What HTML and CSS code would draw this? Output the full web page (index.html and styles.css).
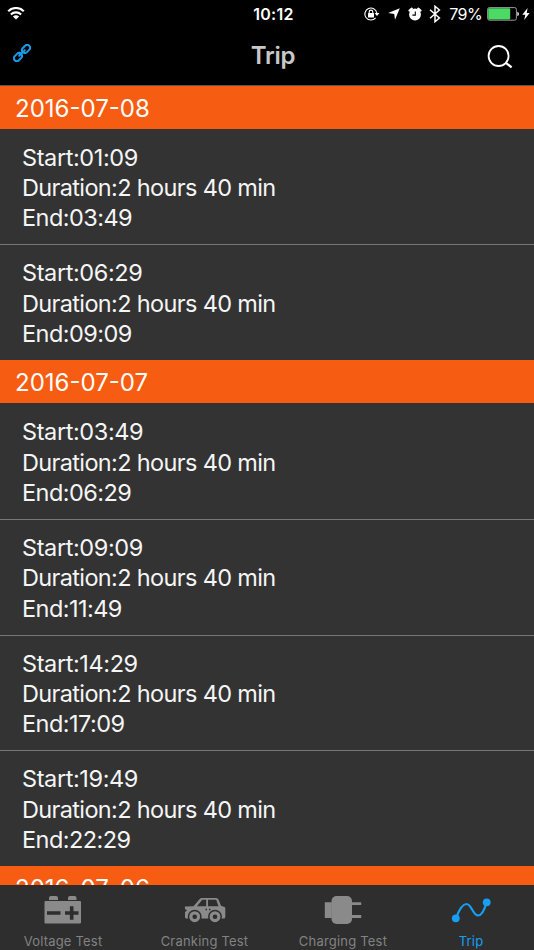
FILE: index.html
```
<!DOCTYPE html>
<html lang="en">
<head>
  <meta charset="UTF-8">
  <title>Trip</title>
  <link rel="stylesheet" href="styles.css">
</head>
<body>

  <header>
    <div class="status">
      <svg class="wifi" width="18" height="14" viewBox="0 0 18 14" fill="none" stroke="#fff" stroke-width="2.1">
        <path d="M1.2 4.200a11 11 0 0 1 15.6 0M3.900 7.500a7.200 7.200 0 0 1 10.200 0"/>
        <path d="M5.900 9.600a4.400 4.400 0 0 1 6.200 0L9 12.600z" fill="#fff" stroke="none"/>
      </svg>
      <span class="time">10:12</span>
      <div class="status-right">
        <svg class="lock" width="16" height="14" viewBox="0 0 16 14">
          <path d="M11.6 10.8A6 6 0 1 1 12.8 6" fill="none" stroke="#fff" stroke-width="1.1"/>
          <path d="M10.6 5.9h4.8l-2.4 3z" fill="#fff"/>
          <rect x="4" y="6" width="6" height="4.4" rx=".5" fill="#fff"/>
          <path d="M5.2 6.3V4.9a1.8 1.8 0 0 1 3.6 0v1.4" fill="none" stroke="#fff" stroke-width="1.1"/>
        </svg>
        <svg class="arrow" width="12" height="12" viewBox="0 0 12 12" fill="#fff">
          <path d="M11.8.2L7 11.8 6.2 5.9.2 5z"/>
        </svg>
        <svg class="alarm" width="14" height="14" viewBox="0 0 14 14">
          <path d="M1.500 3.600L3.800 1.700M12.500 3.600l-2.300-1.900" stroke="#fff" stroke-width="2.2" stroke-linecap="round"/>
          <circle cx="7" cy="7.500" r="5.9" fill="#fff"/>
          <path d="M7.3 4.4v3.7H4.4" fill="none" stroke="#000" stroke-width="1.1"/>
        </svg>
        <svg class="bluetooth" width="12" height="18" viewBox="0 0 12 18" fill="none" stroke="#fff" stroke-width="1.5">
          <path d="M1 4.800l9.400 8.200L6 16.700V1.300L10.400 5 1 13.200"/>
        </svg>
        <span class="percent">79%</span>
        <svg class="battery" width="32" height="14" viewBox="0 0 32 14">
          <rect x=".6" y=".6" width="28.8" height="12.6" rx="1.8" fill="none" stroke="#aaa" stroke-width=".9"/>
          <rect x="1.2" y="1.2" width="22" height="11.4" rx="1" fill="#4cd964"/>
          <path d="M30.4 4.8q1.5.4 1.5 2.1t-1.5 2.1z" fill="#fff"/>
        </svg>
        <svg class="bolt" width="8" height="12" viewBox="0 0 8 12" fill="#fff">
          <path d="M5.6 0L.3 6.7h3L2.2 12l5.4-7.1H4.7z"/>
        </svg>
      </div>
    </div>
    <div class="nav">
      <svg class="link" width="18" height="18" viewBox="0 0 18 18">
        <g transform="rotate(-45 9 9)" fill="none" stroke="#1a9bea" stroke-width="2">
          <rect x="-1.200" y="6.100" width="9" height="5.800" rx="2.900"/>
          <rect x="10.200" y="6.100" width="9" height="5.800" rx="2.900"/>
          <path d="M5 9h8" stroke-linecap="round"/>
        </g>
      </svg>
      <h1>Trip</h1>
      <svg class="search" width="26" height="24" viewBox="0 0 26 24" fill="none" stroke="#fff" stroke-width="1.8">
        <circle cx="11.6" cy="11" r="10"/>
        <path d="M18.6 17.6l6 4.8" stroke-width="2.2"/>
      </svg>
    </div>
  </header>

  <main>
    <h2>2016-07-08</h2>
    <div class="trip">
      <p class="start">Start:01:09</p>
      <p class="duration">Duration:2 hours 40 min</p>
      <p class="end">End:03:49</p>
    </div>
    <div class="trip">
      <p class="start">Start:06:29</p>
      <p class="duration">Duration:2 hours 40 min</p>
      <p class="end">End:09:09</p>
    </div>

    <h2>2016-07-07</h2>
    <div class="trip">
      <p class="start">Start:03:49</p>
      <p class="duration">Duration:2 hours 40 min</p>
      <p class="end">End:06:29</p>
    </div>
    <div class="trip">
      <p class="start">Start:09:09</p>
      <p class="duration">Duration:2 hours 40 min</p>
      <p class="end">End:11:49</p>
    </div>
    <div class="trip">
      <p class="start">Start:14:29</p>
      <p class="duration">Duration:2 hours 40 min</p>
      <p class="end">End:17:09</p>
    </div>
    <div class="trip">
      <p class="start">Start:19:49</p>
      <p class="duration">Duration:2 hours 40 min</p>
      <p class="end">End:22:29</p>
    </div>

    <h2>2016-07-06</h2>
  </main>

  <footer>
    <div class="tab">
      <svg width="38" height="28" viewBox="0 0 38 28" fill="#8a8a8a">
        <path d="M5 4V2q0-2 2-2h5q2 0 2 2v2zM24 4V2q0-2 2-2h4.500q2 0 2 2v2z"/>
        <rect x=".5" y="5" width="36.500" height="22.500" rx="1"/>
        <path d="M3 17h13.500M21 17h13.500M27.700 10.300v13.400" fill="none" stroke="#2e2e2e" stroke-width="3.600"/>
      </svg>
      <span>Voltage Test</span>
    </div>
    <div class="tab">
      <svg width="42" height="28" viewBox="0 0 42 28">
        <path fill="#8a8a8a" fill-rule="evenodd" d="M.8 10.500L9.500 10.300 15.500 3.300Q16.500 2 18 2H32q2 0 2.600 1.700L37 9.700l3.500 1.300q.8.300.8 1.500V21q0 1.500-1.500 1.500H2.500Q1 22.500 1 21v-5l2-1.500L1 13zM13 10.300h9.200V3.800h-4zM24 10.300h10.500L32.200 3.800H24z"/>
        <g fill="#8a8a8a" stroke="#2e2e2e" stroke-width="1.500">
          <circle cx="10.700" cy="20.700" r="6.200"/>
          <circle cx="31" cy="20.700" r="6.200"/>
        </g>
        <circle cx="10.700" cy="20.700" r="2.300" fill="#2e2e2e"/>
        <circle cx="31" cy="20.700" r="2.300" fill="#2e2e2e"/>
        <path d="M21.500 13.500h1.500M25 13.500h1.500" stroke="#2e2e2e" stroke-width="1.300"/>
      </svg>
      <span>Cranking Test</span>
    </div>
    <div class="tab">
      <svg width="38" height="28" viewBox="0 0 38 28" fill="#8a8a8a">
        <path d="M.8 6.200h7v15.800h-7zM27 6.200h10.200V9H27zM27 19h10.200v3H27z"/>
        <rect x="7.500" width="20.500" height="28" rx="5"/>
      </svg>
      <span>Charging Test</span>
    </div>
    <div class="tab active">
      <svg width="40" height="28" viewBox="0 0 40 28" fill="#159ff5">
        <path d="M5 22C8 14 11 8 15.500 8 20.500 8 22 19.500 27 19.500 31 19.500 33.500 14 35.500 6" fill="none" stroke="#159ff5" stroke-width="2.200"/>
        <circle cx="4.800" cy="22.300" r="3.900"/>
        <circle cx="35.700" cy="6.300" r="3.900"/>
      </svg>
      <span>Trip</span>
    </div>
  </footer>

</body>
</html>
```

FILE: styles.css
```
* {
  box-sizing: border-box;
}
body {
  margin: 0;
  height: 950px;
  display: flex;
  flex-direction: column;
  overflow: hidden;
  font-family: Inter, "Liberation Sans", sans-serif;
  background-color: #333;
  color: #f5f5f5;
}
h1, h2, p {
  margin: 0;
  font-weight: 400;
}
svg {
  display: block;
  flex: none;
}

header {
  flex: none;
  height: 85.5px;
  background-color: #000;
  border-bottom: 1px solid #555;
}
.status {
  height: 28px;
  display: grid;
  grid-template-columns: 1fr auto 1fr;
  align-items: center;
  padding: 0 6px 0 7px;
  color: #fff;
}
.time {
  font-size: 16px;
  font-weight: 600;
  letter-spacing: 0.3px;
  padding-left: 12px;
}
.status-right {
  display: flex;
  align-items: center;
  justify-content: flex-end;
}
.arrow {
  margin-left: 8px;
}
.alarm {
  margin-left: 8px;
}
.bluetooth {
  margin-left: 7px;
}
.percent {
  margin-left: 8px;
  font-size: 16px;
  letter-spacing: -0.6px;
}
.battery {
  margin-left: 5px;
}
.bolt {
  margin-left: 3px;
  margin-right: -2px;
}
.nav {
  height: 56px;
  display: grid;
  grid-template-columns: 1fr auto 1fr;
  align-items: center;
  padding: 0 21px 0 13px;
}
.link {
  margin-bottom: 6px;
}
.nav h1 {
  font-size: 24px;
  font-weight: 600;
  letter-spacing: -0.3px;
  color: #c8c8c8;
  padding-left: 20px;
  margin-bottom: 1px;
}
.search {
  justify-self: end;
  margin-top: 2px;
}

main {
  flex: 1;
  min-height: 0;
  overflow: hidden;
}
h2 {
  height: 43.4px;
  padding-left: 15px;
  font-size: 24px;
  line-height: 45px;
  color: #fff;
  background-color: #f65d12;
}
.trip {
  height: 115.6px;
  padding: 14px 0 0 22px;
}
.trip + .trip {
  border-top: 1px solid #777;
  padding-top: 13px;
}
.trip p {
  font-size: 23.5px;
  line-height: 30.3px;
}
.trip .start {
  letter-spacing: -0.4px;
}
.trip .duration {
  letter-spacing: -0.65px;
}
.trip .end {
  letter-spacing: -0.55px;
}

footer {
  flex: none;
  height: 65.5px;
  display: grid;
  grid-template-columns: 126px 157px 120px 131px;
  background-color: #2e2e2e;
  color: #828282;
}
.tab {
  display: flex;
  flex-direction: column;
  align-items: center;
  padding-top: 11.5px;
}
.tab span {
  margin-top: 7.5px;
  font-size: 13px;
  line-height: 18px;
  letter-spacing: 0.2px;
}
.active {
  padding-left: 5px;
  color: #159ff5;
}
```
